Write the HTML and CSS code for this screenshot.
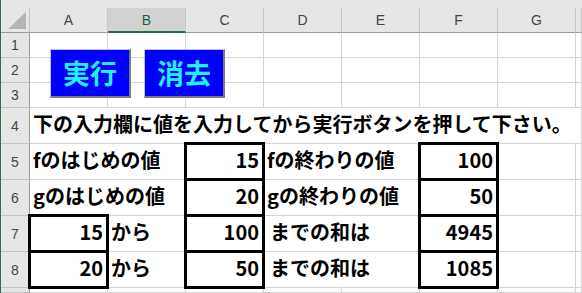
FILE: index.html
```html
<!DOCTYPE html>
<html lang="ja">
<head>
<meta charset="utf-8">
<title>Sheet</title>
<link rel="stylesheet" href="styles.css">
</head>
<body>
<div class="app">
  <div class="topband"></div>
  <div class="sheet">
    <div class="corner"><span class="tri"></span></div>
    <div class="ch">A</div><div class="ch sel">B</div><div class="ch">C</div><div class="ch">D</div><div class="ch">E</div><div class="ch">F</div><div class="ch">G</div><div class="ch"></div>

    <div class="rh">1</div><div class="c"></div><div class="c"></div><div class="c"></div><div class="c"></div><div class="c"></div><div class="c"></div><div class="c"></div><div class="c"></div>
    <div class="rh">2</div><div class="c"></div><div class="c"></div><div class="c"></div><div class="c"></div><div class="c"></div><div class="c"></div><div class="c"></div><div class="c"></div>
    <div class="rh">3</div><div class="c"></div><div class="c"></div><div class="c"></div><div class="c"></div><div class="c"></div><div class="c"></div><div class="c"></div><div class="c"></div>

    <div class="rh">4</div><div class="c t nr">下の入力欄に値を入力してから実行ボタンを押して下さい。</div><div class="c nr"></div><div class="c nr"></div><div class="c nr"></div><div class="c nr"></div><div class="c nr"></div><div class="c nr"></div><div class="c"></div>

    <div class="rh">5</div><div class="c t nr">fのはじめの値</div><div class="c"></div><div class="c t n tb">15</div><div class="c t nr">fの終わりの値</div><div class="c"></div><div class="c t n tb">100</div><div class="c"></div><div class="c"></div>

    <div class="rh">6</div><div class="c t nr">gのはじめの値</div><div class="c"></div><div class="c t n tb">20</div><div class="c t nr">gの終わりの値</div><div class="c"></div><div class="c t n tb">50</div><div class="c"></div><div class="c"></div>

    <div class="rh">7</div><div class="c t n tb">15</div><div class="c t">から</div><div class="c t n tb">100</div><div class="c t nr ind">までの和は</div><div class="c"></div><div class="c t n tb">4945</div><div class="c"></div><div class="c"></div>

    <div class="rh">8</div><div class="c t n tb">20</div><div class="c t">から</div><div class="c t n tb">50</div><div class="c t nr ind">までの和は</div><div class="c"></div><div class="c t n tb">1085</div><div class="c"></div><div class="c"></div>

    <div class="rh"></div><div class="c"></div><div class="c"></div><div class="c"></div><div class="c"></div><div class="c"></div><div class="c"></div><div class="c"></div><div class="c"></div>
  </div>
  <div class="shapes">
    <div class="btn">実行</div>
    <div class="btn">消去</div>
  </div>
</div>
</body>
</html>
```

FILE: styles.css
```css
* { box-sizing: border-box; }
html, body { margin: 0; padding: 0; background: #fff; }
body { width: 582px; height: 293px; overflow: hidden; }

.app {
  position: relative;
  width: 582px;
  height: 293px;
  overflow: hidden;
  border-left: 1px solid #2f6b4a;
  display: flex;
  flex-direction: column;
}

.topband { height: 8px; background: #e6e6e6; flex: none; }

.sheet {
  flex: 1;
  display: grid;
  grid-template-columns: 29px repeat(7, 78px) 1fr;
  grid-template-rows: 25px repeat(3, 25px) repeat(5, 36px) 1fr;
  font-family: "Noto Sans CJK JP", "Noto Sans", sans-serif;
}

.corner {
  background: #e6e6e6;
  border-right: 1px solid #c6c6c6;
  border-bottom: 1px solid #9b9b9b;
  position: relative;
}
.tri {
  position: absolute;
  left: 7px;
  top: 4px;
  width: 18px;
  height: 17px;
  background: #b5b5b5;
  clip-path: polygon(100% 0, 100% 100%, 0 100%);
}

.ch {
  background: #e6e6e6;
  border-right: 1px solid #c6c6c6;
  border-bottom: 1px solid #9b9b9b;
  display: flex;
  align-items: center;
  justify-content: center;
  font-family: "Liberation Sans", "DejaVu Sans", sans-serif;
  font-size: 14px;
  color: #444;
}
.ch.sel {
  background: #d2d2d2;
  color: #1f5f40;
  border-bottom: 2px solid #217346;
}

.rh {
  background: #e6e6e6;
  border-right: 1px solid #9b9b9b;
  border-bottom: 1px solid #c6c6c6;
  display: flex;
  align-items: center;
  justify-content: center;
  font-family: "Liberation Sans", "DejaVu Sans", sans-serif;
  font-size: 14px;
  color: #444;
}

.c {
  border-right: 1px solid #d4d4d4;
  border-bottom: 1px solid #d4d4d4;
  min-width: 0;
}
.c.nr { border-right-color: transparent; }

.t {
  display: flex;
  align-items: center;
  padding: 0 3px 3px 3px;
  white-space: nowrap;
  overflow: visible;
  font-size: 20px;
  font-weight: 700;
  line-height: 24px;
  color: #000;
}
.t.n { justify-content: flex-end; padding-right: 4px; }
.t.ind { padding-left: 6px; }

.tb { position: relative; }
.tb::after {
  content: "";
  position: absolute;
  left: -2px;
  top: -2px;
  right: -2px;
  bottom: -2px;
  border: 3px solid #000;
  z-index: 1;
  pointer-events: none;
}

.shapes {
  position: absolute;
  left: 49px;
  top: 49px;
  display: flex;
  gap: 13px;
  z-index: 2;
}
.btn {
  width: 81px;
  height: 49px;
  background: #0000ff;
  border-top: 1px solid #c4c4c4;
  border-left: 1px solid #c4c4c4;
  border-right: 2px solid #7a7a7a;
  border-bottom: 2px solid #7a7a7a;
  display: flex;
  align-items: center;
  justify-content: center;
  color: #22f0ff;
  font-family: "Noto Sans CJK JP", sans-serif;
  font-weight: 700;
  font-size: 27px;
  line-height: 30px;
  padding-bottom: 1px;
}
```
